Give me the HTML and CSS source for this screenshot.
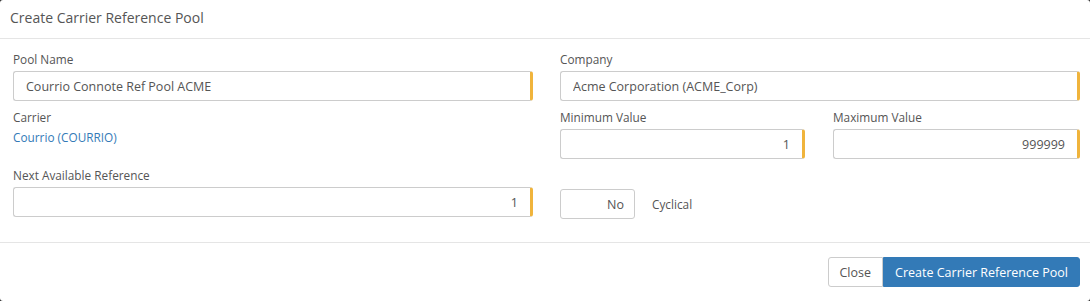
FILE: index.html
```html
<!DOCTYPE html>
<html lang="en">
<head>
    <meta charset="UTF-8">
    <meta name="viewport" content="width=device-width, initial-scale=1.0">
    <title>Create Carrier Reference Pool</title>
    <link rel="stylesheet" href="styles.css">
</head>
<body>
    <div class="modal">
        <div class="modal-header">Create Carrier Reference Pool</div>
        <div class="modal-body">
            <div class="row">
                <div class="group">
                    <label class="label">Pool Name</label>
                    <input type="text" class="input required" value="Courrio Connote Ref Pool ACME">
                </div>
                <div class="group">
                    <label class="label">Company</label>
                    <input type="text" class="input required" value="Acme Corporation (ACME_Corp)">
                </div>
            </div>
            <div class="row">
                <div class="group">
                    <label class="label">Carrier</label>
                    <a class="link" href="#">Courrio (COURRIO)</a>
                </div>
                <div class="row inner">
                    <div class="group">
                        <label class="label">Minimum Value</label>
                        <input type="text" class="input required number" value="1">
                    </div>
                    <div class="group">
                        <label class="label">Maximum Value</label>
                        <input type="text" class="input required number" value="999999">
                    </div>
                </div>
            </div>
            <div class="row">
                <div class="group">
                    <label class="label">Next Available Reference</label>
                    <input type="text" class="input required number" value="1">
                </div>
                <div class="group toggle-group">
                    <div class="toggle">
                        <button class="toggle-btn">No</button>
                        <span class="toggle-label">Cyclical</span>
                    </div>
                </div>
            </div>
        </div>
        <div class="modal-footer">
            <button class="btn">Close</button>
            <button class="btn primary">Create Carrier Reference Pool</button>
        </div>
    </div>
</body>
</html>
```

FILE: styles.css
```css
html, body {
    margin: 0;
    padding: 0;
    background: #2b2b2b;
}
body {
    font-family: "Open Sans", "Noto Sans", sans-serif;
    color: #555;
}
.modal {
    width: 1090px;
    height: 301px;
    background: #fff;
    border-radius: 3px;
    overflow: hidden;
}
.modal-header {
    height: 39px;
    line-height: 36px;
    padding: 0 10px;
    font-size: 14px;
    color: #555;
    border-bottom: 1px solid #e5e5e5;
    box-sizing: border-box;
}
.modal-body {
    padding: 13px 10px 14px 13px;
    border-bottom: 1px solid #e5e5e5;
    height: 204px;
    box-sizing: border-box;
}
.row {
    display: grid;
    grid-template-columns: 1fr 1fr;
    column-gap: 27px;
}
.row.inner {
    grid-template-columns: 245px 1fr;
    column-gap: 28px;
}
.group {
    margin-bottom: 9px;
}
.label {
    display: block;
    font-size: 11.8px;
    line-height: 15px;
    margin-bottom: 4px;
    color: #555;
}
.input {
    display: block;
    width: 100%;
    height: 30px;
    box-sizing: border-box;
    border: 1px solid #ccc;
    border-radius: 3px;
    padding: 0 12px;
    font-family: inherit;
    font-size: 12.5px;
    color: #555;
    background: #fff;
}
.input.required {
    border-right: 3px solid #f0b43c;
}
.input.number {
    text-align: right;
}
.link {
    display: block;
    font-size: 11.8px;
    line-height: 16px;
    color: #337ab7;
    text-decoration: none;
}
.toggle-group {
    padding-top: 21px;
}
.toggle {
    display: flex;
    align-items: center;
}
.toggle-btn {
    width: 75px;
    height: 30px;
    border: 1px solid #ccc;
    border-radius: 3px;
    background: #fff;
    font-family: inherit;
    font-size: 12.5px;
    color: #555;
    text-align: right;
    padding: 0 10px;
}
.toggle-label {
    margin-left: 17px;
    font-size: 11.8px;
    color: #555;
}
.modal-footer {
    display: flex;
    justify-content: flex-end;
    padding: 14px 10px 14px 0;
}
.btn {
    height: 30px;
    padding: 0 11px;
    border: 1px solid #ccc;
    border-radius: 3px 0 0 3px;
    background: #fff;
    font-family: inherit;
    font-size: 12.5px;
    color: #555;
}
.btn.primary {
    border-color: #337ab7;
    background: #337ab7;
    color: #fff;
    border-radius: 0 3px 3px 0;
}
```
